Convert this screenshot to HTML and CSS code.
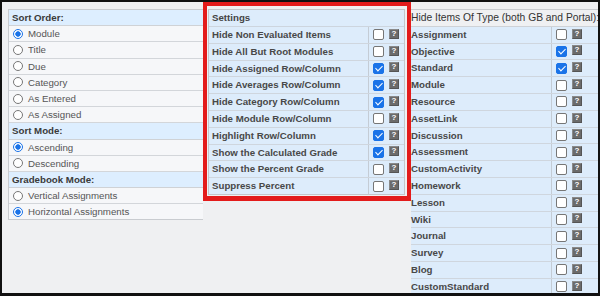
FILE: index.html
```html
<!DOCTYPE html>
<html lang="en">

<head>
    <meta charset="UTF-8">
    <meta name="viewport" content="width=device-width, initial-scale=1.0">
    <title>Gradebook Options</title>
    <link rel="stylesheet" href="styles.css">
</head>

<body>
    <div class="frame">
        <!-- sort / mode options -->
        <div class="panel-left">
            <div class="left-head">Sort Order:</div>
            <label class="option"><input type="radio" name="order" checked>Module</label>
            <label class="option"><input type="radio" name="order">Title</label>
            <label class="option"><input type="radio" name="order">Due</label>
            <label class="option"><input type="radio" name="order">Category</label>
            <label class="option"><input type="radio" name="order">As Entered</label>
            <label class="option"><input type="radio" name="order">As Assigned</label>
            <div class="left-head">Sort Mode:</div>
            <label class="option"><input type="radio" name="mode" checked>Ascending</label>
            <label class="option"><input type="radio" name="mode">Descending</label>
            <div class="left-head">Gradebook Mode:</div>
            <label class="option"><input type="radio" name="gb">Vertical Assignments</label>
            <label class="option"><input type="radio" name="gb" checked>Horizontal Assignments</label>
        </div>

        <!-- settings (highlighted) -->
        <div class="highlight">
            <div class="settings">
                <div class="set-head">Settings</div>
                <div class="set-row"><div class="set-label">Hide Non Evaluated Items</div><div class="set-ctrl"><input class="cb" type="checkbox"><span class="help">?</span></div></div>
                <div class="set-row"><div class="set-label">Hide All But Root Modules</div><div class="set-ctrl"><input class="cb" type="checkbox"><span class="help">?</span></div></div>
                <div class="set-row"><div class="set-label">Hide Assigned Row/Column</div><div class="set-ctrl"><input class="cb" type="checkbox" checked><span class="help">?</span></div></div>
                <div class="set-row"><div class="set-label">Hide Averages Row/Column</div><div class="set-ctrl"><input class="cb" type="checkbox" checked><span class="help">?</span></div></div>
                <div class="set-row"><div class="set-label">Hide Category Row/Column</div><div class="set-ctrl"><input class="cb" type="checkbox" checked><span class="help">?</span></div></div>
                <div class="set-row"><div class="set-label">Hide Module Row/Column</div><div class="set-ctrl"><input class="cb" type="checkbox"><span class="help">?</span></div></div>
                <div class="set-row"><div class="set-label">Highlight Row/Column</div><div class="set-ctrl"><input class="cb" type="checkbox" checked><span class="help">?</span></div></div>
                <div class="set-row"><div class="set-label">Show the Calculated Grade</div><div class="set-ctrl"><input class="cb" type="checkbox" checked><span class="help">?</span></div></div>
                <div class="set-row"><div class="set-label">Show the Percent Grade</div><div class="set-ctrl"><input class="cb" type="checkbox"><span class="help">?</span></div></div>
                <div class="set-row last"><div class="set-label">Suppress Percent</div><div class="set-ctrl"><input class="cb" type="checkbox"><span class="help">?</span></div></div>
            </div>
        </div>

        <!-- item types -->
        <div class="panel-right">
            <div class="right-head">Hide Items Of Type (both GB and Portal):</div>
            <div class="type-row"><div class="type-label">Assignment</div><div class="type-ctrl"><input class="cb" type="checkbox"><span class="help">?</span></div></div>
            <div class="type-row"><div class="type-label">Objective</div><div class="type-ctrl"><input class="cb" type="checkbox" checked><span class="help">?</span></div></div>
            <div class="type-row"><div class="type-label">Standard</div><div class="type-ctrl"><input class="cb" type="checkbox" checked><span class="help">?</span></div></div>
            <div class="type-row"><div class="type-label">Module</div><div class="type-ctrl"><input class="cb" type="checkbox"><span class="help">?</span></div></div>
            <div class="type-row"><div class="type-label">Resource</div><div class="type-ctrl"><input class="cb" type="checkbox"><span class="help">?</span></div></div>
            <div class="type-row"><div class="type-label">AssetLink</div><div class="type-ctrl"><input class="cb" type="checkbox"><span class="help">?</span></div></div>
            <div class="type-row"><div class="type-label">Discussion</div><div class="type-ctrl"><input class="cb" type="checkbox"><span class="help">?</span></div></div>
            <div class="type-row"><div class="type-label">Assessment</div><div class="type-ctrl"><input class="cb" type="checkbox"><span class="help">?</span></div></div>
            <div class="type-row"><div class="type-label">CustomActivity</div><div class="type-ctrl"><input class="cb" type="checkbox"><span class="help">?</span></div></div>
            <div class="type-row"><div class="type-label">Homework</div><div class="type-ctrl"><input class="cb" type="checkbox"><span class="help">?</span></div></div>
            <div class="type-row"><div class="type-label">Lesson</div><div class="type-ctrl"><input class="cb" type="checkbox"><span class="help">?</span></div></div>
            <div class="type-row"><div class="type-label">Wiki</div><div class="type-ctrl"><input class="cb" type="checkbox"><span class="help">?</span></div></div>
            <div class="type-row"><div class="type-label">Journal</div><div class="type-ctrl"><input class="cb" type="checkbox"><span class="help">?</span></div></div>
            <div class="type-row"><div class="type-label">Survey</div><div class="type-ctrl"><input class="cb" type="checkbox"><span class="help">?</span></div></div>
            <div class="type-row"><div class="type-label">Blog</div><div class="type-ctrl"><input class="cb" type="checkbox"><span class="help">?</span></div></div>
            <div class="type-row"><div class="type-label">CustomStandard</div><div class="type-ctrl"><input class="cb" type="checkbox"><span class="help">?</span></div></div>
        </div>
    </div>
</body>

</html>
```

FILE: styles.css
```css
body {
    margin: 0;
}

.frame {
    width: 600px;
    height: 296px;
    box-sizing: border-box;
    border: 2px solid #111;
    border-bottom-width: 3px;
    background-color: #eff0f2;
    display: flex;
    align-items: flex-start;
    overflow: hidden;
    font-family: "Liberation Sans", Arial, sans-serif;
    font-size: 9.7px;
}

/* left column */
.panel-left {
    width: 194px;
    flex-shrink: 0;
    margin: 7px 0 0 6px;
    border: 1px solid #c9ccd0;
    border-right: none;
    background-color: #f6f7f9;
}

.left-head {
    height: 15.2px;
    line-height: 15.2px;
    padding-left: 3px;
    background-color: #ddeeff;
    border-bottom: 1px solid #cfd2d6;
    font-weight: bold;
    color: #3a3a3a;
}

.option {
    display: flex;
    align-items: center;
    gap: 5px;
    height: 15.2px;
    padding-left: 4px;
    border-bottom: 1px solid #d3d6da;
    color: #555;
}

.option:last-child {
    border-bottom: none;
}

.option input {
    appearance: none;
    width: 10px;
    height: 10px;
    margin: 0;
    border: 1px solid #777;
    border-radius: 50%;
    background-color: #fff;
}

.option input:checked {
    border: 1.5px solid #1a73e8;
    background: radial-gradient(circle, #1a73e8 0 2.4px, #fff 3px);
}

/* middle column */
.highlight {
    width: 208px;
    flex-shrink: 0;
    box-sizing: border-box;
    border: 4px solid #e31b1b;
    border-bottom-width: 5px;
    padding: 3px 2px 1px 1px;
}

.settings {
    border: 1px solid #c3c6ca;
    background-color: #ddecfb;
}

.set-head {
    height: 16px;
    line-height: 16px;
    padding-left: 3px;
    border-bottom: 1px solid #cdd5de;
    font-weight: bold;
    color: #444;
}

.set-row {
    display: flex;
    height: 15.8px;
    border-bottom: 1px solid #cfd6de;
}

.set-row.last {
    border-bottom: none;
}

.set-label {
    width: 156px;
    padding-left: 3px;
    line-height: 15.8px;
    border-right: 1px solid #c4ccd5;
    font-weight: bold;
    color: #484848;
    white-space: nowrap;
}

.set-ctrl,
.type-ctrl {
    display: flex;
    align-items: center;
    gap: 5px;
    padding-left: 4px;
}

/* right column */
.panel-right {
    flex: 1;
    min-width: 0;
    margin-top: 7px;
    border-top: 1px solid #c9ccd0;
}

.right-head {
    height: 15.8px;
    line-height: 15.8px;
    border-bottom: 1px solid #cfd2d6;
    font-size: 10.3px;
    color: #333;
    white-space: nowrap;
}

.type-row {
    display: flex;
    height: 15.8px;
    border-bottom: 1px solid #cfd6de;
    background-color: #ddecfb;
}

.type-label {
    width: 140px;
    line-height: 15.8px;
    border-right: 1px solid #c4ccd5;
    font-weight: bold;
    color: #484848;
}

/* checkbox + help */
.cb {
    appearance: none;
    position: relative;
    width: 11px;
    height: 11px;
    margin: 0;
    border: 1px solid #767676;
    border-radius: 2px;
    background-color: #fff;
}

.cb:checked {
    border-color: #1a73e8;
    background-color: #1a73e8;
}

.cb:checked::after {
    content: "";
    position: absolute;
    left: 3px;
    top: 0;
    width: 3px;
    height: 6px;
    border: solid #fff;
    border-width: 0 1.5px 1.5px 0;
    transform: rotate(45deg);
}

.help {
    width: 10px;
    height: 10px;
    box-sizing: border-box;
    margin-top: -2px;
    border: 1px solid #8a8a8a;
    border-right-color: #555;
    border-bottom-color: #555;
    background-color: #6b6b6b;
    color: #fff;
    font-size: 8px;
    font-weight: bold;
    line-height: 8px;
    text-align: center;
}
```
